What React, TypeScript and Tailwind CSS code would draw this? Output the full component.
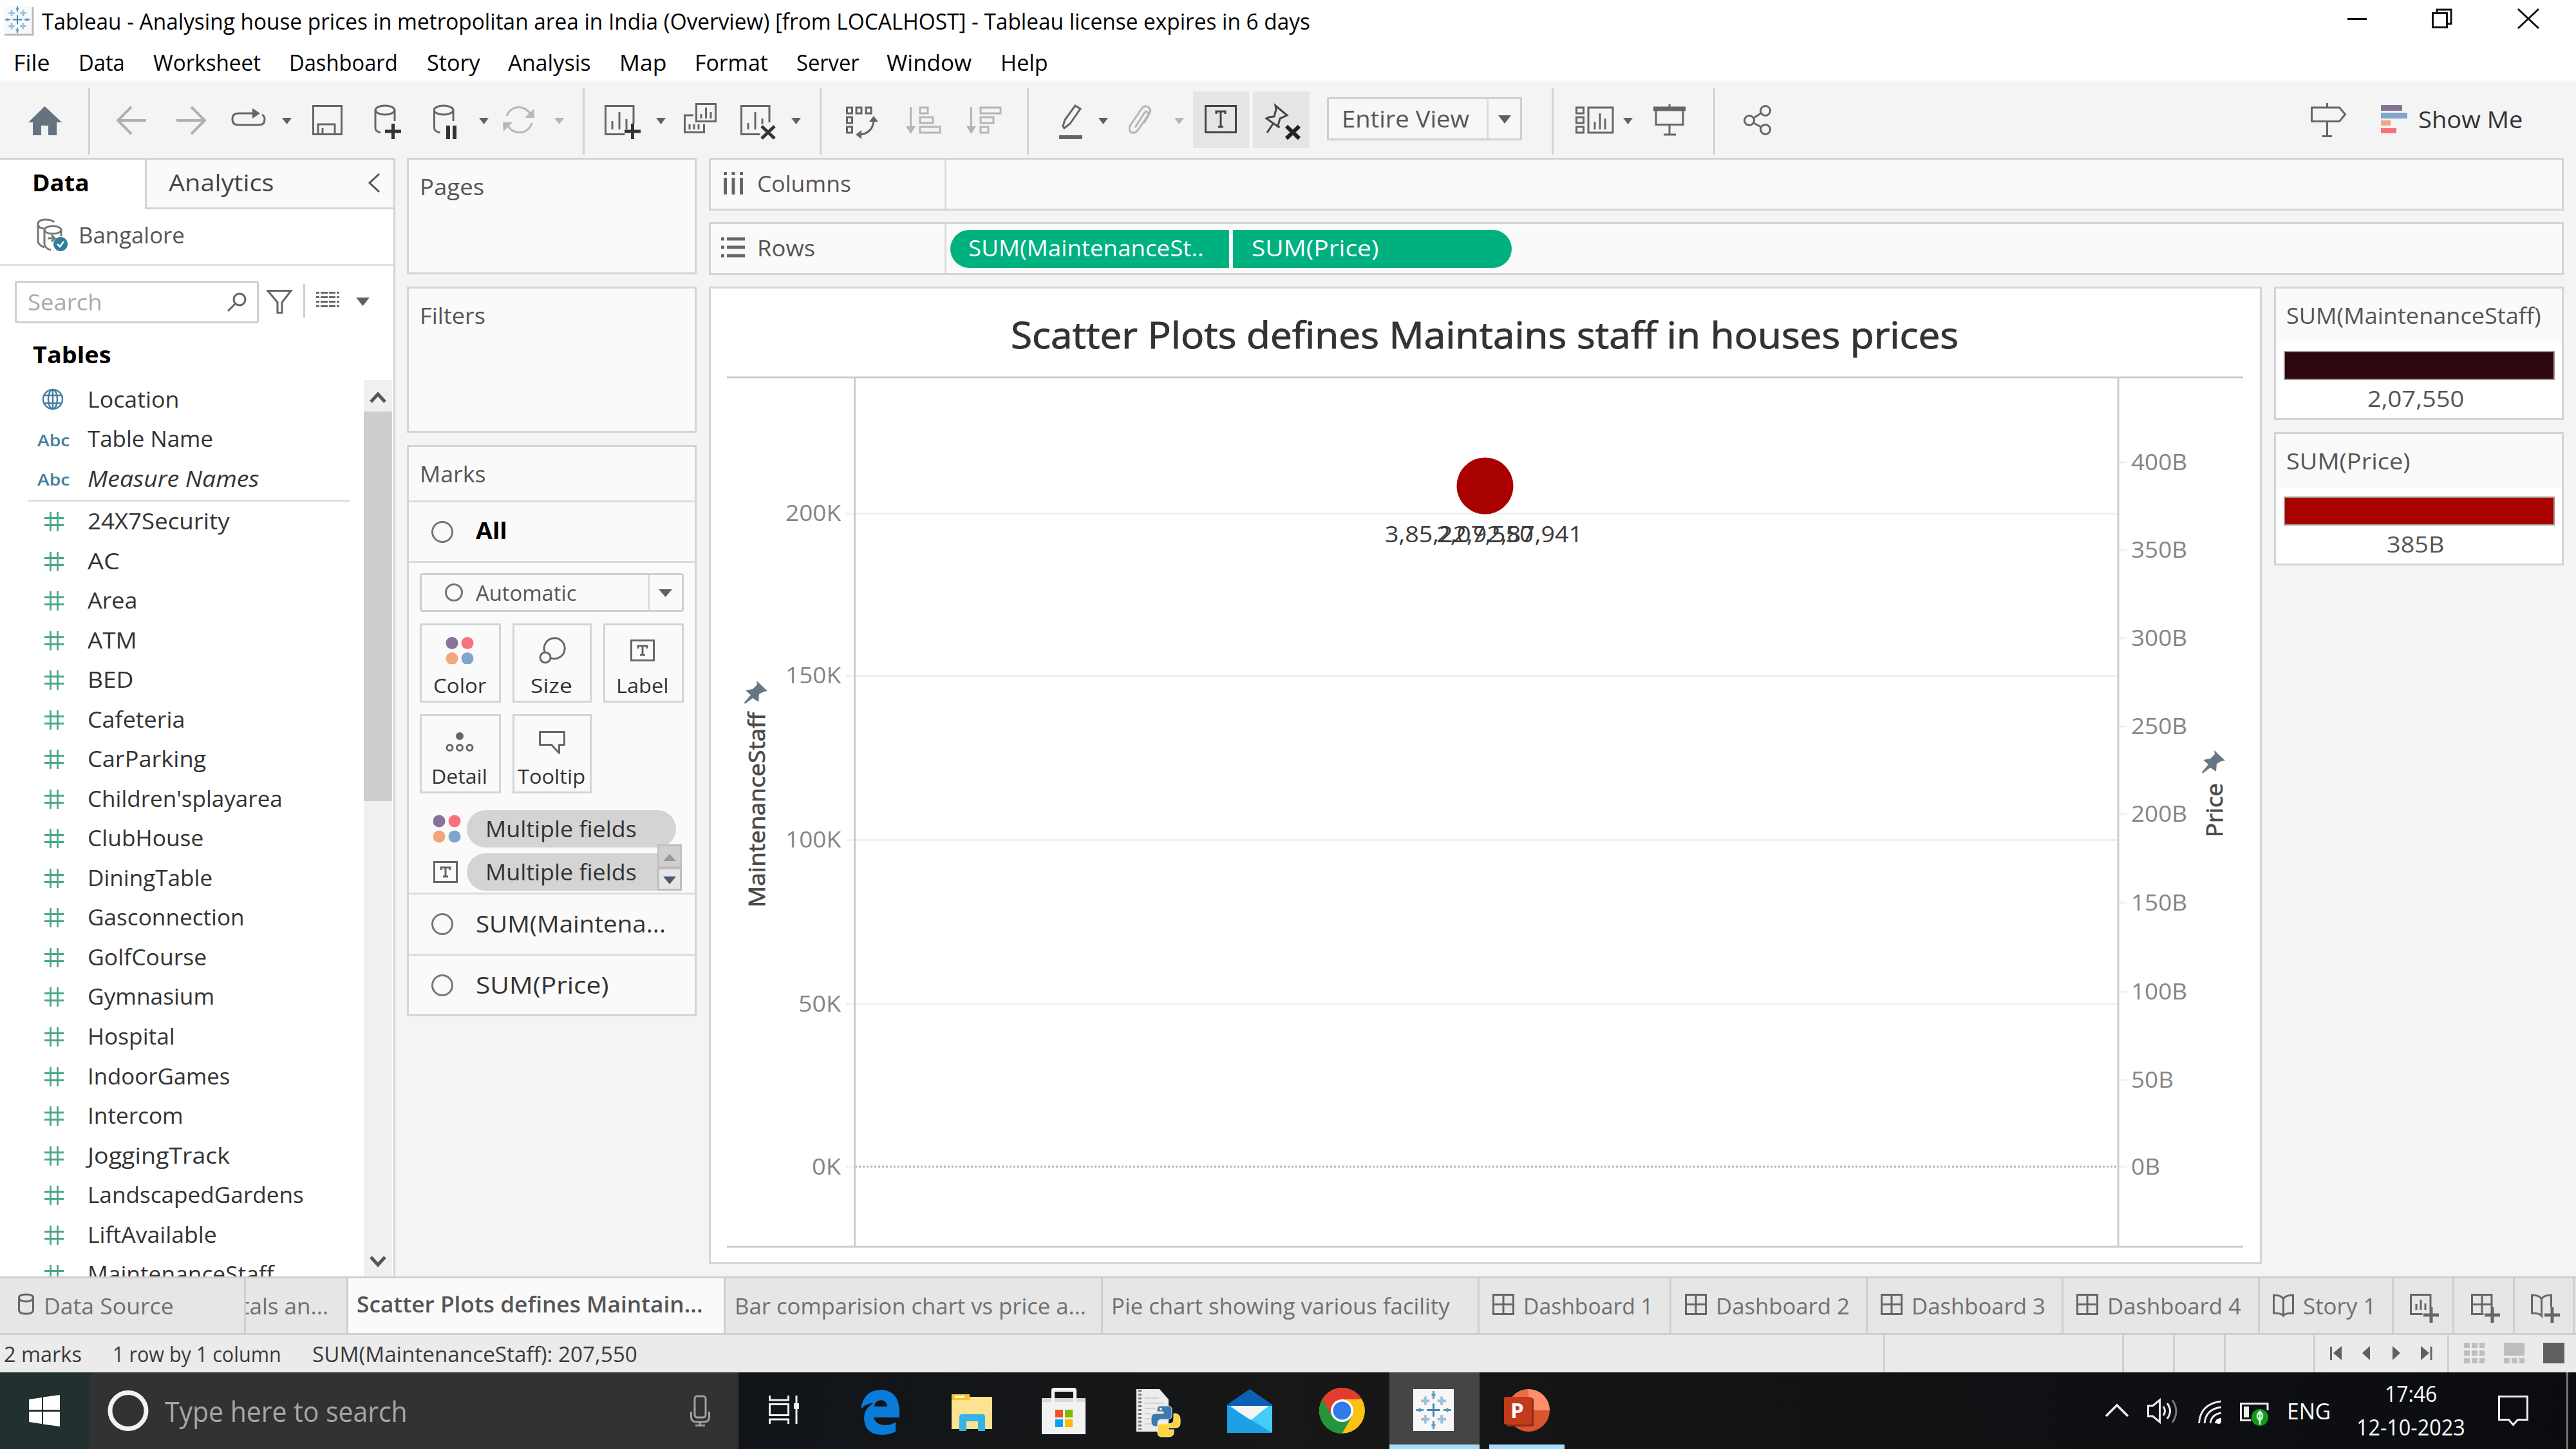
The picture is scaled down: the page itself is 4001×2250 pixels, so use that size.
import React, { useLayoutEffect, useRef } from "react";

type TextProps = { w: number; className?: string; children: string };

/** A single line of text, stretched horizontally so that it spans `w` pixels. */
function T({ w, className = "", children }: TextProps) {
  const ref = useRef<HTMLSpanElement>(null);
  useLayoutEffect(() => {
    const el = ref.current;
    if (!el || !el.parentElement) return;
    el.parentElement.style.width = `${w}px`;
    el.style.transform = `scaleX(${(w + 3) / el.offsetWidth})`;
  }, [w, children]);
  return (
    <span className={`flex shrink-0 justify-start whitespace-pre leading-none ${className}`}>
      <span ref={ref} className="-ml-[2px] block shrink-0 origin-left">
        {children}
      </span>
    </span>
  );
}

type IcoProps = { box: [number, number, number, number]; c?: string; sw?: number; className?: string; children: React.ReactNode };

function Ico({ box, c = "#666", sw = 3, className = "", children }: IcoProps) {
  return (
    <svg
      width={box[2]}
      height={box[3]}
      viewBox={box.join(" ")}
      fill="none"
      stroke={c}
      strokeWidth={sw}
      className={`block shrink-0 ${className}`}
    >
      {children}
    </svg>
  );
}

/* ---------- shared drawings ---------- */

function Plus({ x, y, r, v = r, c, s = 3 }: { x: number; y: number; r: number; v?: number; c: string; s?: number }) {
  return <path d={`M${x - r} ${y}h${2 * r}M${x} ${y - v}v${2 * v}`} stroke={c} strokeWidth={s} />;
}

function TableauMark({ x, y, k }: { x: number; y: number; k: number }) {
  return (
    <g>
      <Plus x={x} y={y} r={10 * k} c="#3f83ae" s={2.8 * k} />
      <Plus x={x} y={y - 23 * k} r={3 * k} v={6 * k} c="#5b97bd" s={3 * k} />
      <Plus x={x} y={y + 23 * k} r={3 * k} v={6 * k} c="#5b97bd" s={3 * k} />
      <Plus x={x - 21 * k} y={y} r={6 * k} v={3 * k} c="#5b97bd" s={3 * k} />
      <Plus x={x + 21 * k} y={y} r={6 * k} v={3 * k} c="#5b97bd" s={3 * k} />
      <Plus x={x - 12.5 * k} y={y - 14 * k} r={6.5 * k} c="#9cc1d8" s={4 * k} />
      <Plus x={x + 12.5 * k} y={y - 14 * k} r={6.5 * k} c="#9cc1d8" s={4 * k} />
      <Plus x={x - 12.5 * k} y={y + 14 * k} r={6.5 * k} c="#9cc1d8" s={4 * k} />
      <Plus x={x + 12.5 * k} y={y + 14 * k} r={6.5 * k} c="#9cc1d8" s={4 * k} />
    </g>
  );
}

function Dots({ x, y }: { x: number; y: number }) {
  return (
    <g stroke="none">
      <circle cx={x} cy={y} r="9.5" fill="#86739a" />
      <circle cx={x + 24} cy={y} r="9.5" fill="#f8717f" />
      <circle cx={x} cy={y + 24} r="9.5" fill="#f2a679" />
      <circle cx={x + 24} cy={y + 24} r="9.5" fill="#7fa5cc" />
    </g>
  );
}

function TBox({ x, y, w = 38, h = 34 }: { x: number; y: number; w?: number; h?: number }) {
  const m = x + w / 2;
  return (
    <g>
      <rect x={x + 1.5} y={y + 1.5} width={w - 3} height={h - 3} />
      <path d={`M${m - 7} ${y + 14}v-4h14v4M${m} ${y + 10}v${h - 20}M${m - 4} ${y + h - 10}h8`} />
    </g>
  );
}

/* ---------- title bar and menu ---------- */

function TitleBar() {
  return (
    <div className="flex h-[66px] items-start bg-white">
      <Ico box={[0, 0, 67, 66]}>
        <rect x="7" y="10" width="44" height="44" fill="#f6f8fa" stroke="none" />
        <path d="M7 54h44V11" stroke="#b9b9b9" strokeWidth="3" />
        <TableauMark x={27} y={30.5} k={0.72} />
      </Ico>
      <div className="flex h-[64px] items-center">
        <T w={1967} className="text-[35px] text-black">
          Tableau - Analysing house prices in metropolitan area in India (Overview) [from LOCALHOST] - Tableau license expires in 6 days
        </T>
      </div>
      <Ico box={[3640, 0, 361, 66]} c="#111" className="ml-auto">
        <path d="M3646 29.5h30" />
        <path d="M3778.500 20.500h22v22h-22zM3785 19v-4h22v22h-5" />
        <path d="M3911 14l32 30M3943 14l-32 30" />
      </Ico>
    </div>
  );
}

function MenuBar() {
  return (
    <div className="grid h-[59px] grid-cols-[101px_116px_211px_214px_126px_173px_117px_158px_140px_177px_100px] items-center justify-items-start bg-white pl-[23px] pt-[2px] text-[35px] text-black">
      <T w={53}>File</T>
      <T w={69}>Data</T>
      <T w={164}>Worksheet</T>
      <T w={166}>Dashboard</T>
      <T w={80}>Story</T>
      <T w={126}>Analysis</T>
      <T w={70}>Map</T>
      <T w={111}>Format</T>
      <T w={95}>Server</T>
      <T w={129}>Window</T>
      <T w={71}>Help</T>
    </div>
  );
}

/* ---------- toolbar ---------- */

function Tool({ x, w, c, children }: { x: number; w: number; c?: string; children: React.ReactNode }) {
  return (
    <Ico box={[x, 142, w, 88]} c={c}>
      {children}
    </Ico>
  );
}

function Caret({ light = false }: { light?: boolean }) {
  return (
    <Ico box={[0, 142, 16, 88]}>
      <path d="M0 183h15l-7.500 10z" stroke="none" fill={light ? "#b5b5b5" : "#606060"} />
    </Ico>
  );
}

function Sep() {
  return <div className="-mt-[5px] h-[103px] w-[3px] bg-[#d2d2d2]" />;
}

function Toolbar() {
  return (
    <div className="grid h-[120px] grid-cols-[94px_44px_92px_86px_79px_47px_96px_92px_71px_37px_80px_44px_34px_80px_43px_88px_79px_44px_41px_93px_94px_94px_49px_62px_47px_71px_29px_93px_115px_349px_37px_74px_47px_93px_47px_881px_109px_303px] items-start bg-[#f4f4f4] pl-[43px] pt-[17px]">
      <Tool x={43} w={56}>
        <path d="M69.500 165L44 190h7v20h13v-15h11v15h13v-20h8z" fill="#66727f" stroke="none" />
      </Tool>
      <Sep />
      <Tool x={181} w={50} c="#b0b0b0">
        <path d="M227 187h-43M204 166l-21 21 21 21" strokeWidth="4" />
      </Tool>
      <Tool x={273} w={50} c="#b0b0b0">
        <path d="M274 187h43M297 166l21 21-21 21" strokeWidth="4" />
      </Tool>
      <Tool x={359} w={58}>
        <path d="M396 176h-26q-9 0-9 9t9 9h32q9 0 9-9 0-5-4-7" />
        <path d="M392 168l12 8-12 8z" fill="#666" stroke="none" />
      </Tool>
      <Caret />
      <Tool x={485} w={50}>
        <path d="M486.500 164.500h44v44h-44z M494 208v-15h26v15M501 208v-9" />
      </Tool>
      <Tool x={581} w={46}>
        <ellipse cx="598" cy="171" rx="15" ry="7" />
        <path d="M583 171v28q0 5 8 7M613 171v17" />
        <path d="M598 204h25M610.500 192v24" stroke="#333" strokeWidth="5" />
      </Tool>
      <Tool x={673} w={46}>
        <ellipse cx="689" cy="171" rx="15" ry="7" />
        <path d="M674.500 171v28q0 5 9 7M704 171v17" />
        <path d="M696 195v21M706 195v21" stroke="#333" strokeWidth="6" />
      </Tool>
      <Caret />
      <Tool x={781} w={54} c="#b8b8b8">
        <path d="M787 180a20 20 0 0 1 37-2M826 191a20 20 0 0 1-38 2" />
        <path d="M815 183h15l-1-14zM796 190h-15l1 14z" fill="#b8b8b8" stroke="none" />
      </Tool>
      <Caret light />
      <Sep />
      <Tool x={939} w={58}>
        <path d="M984 192v-27.500h-43.500v44h30M951 201v-13M962 201v-27M973 201v-16" />
        <path d="M970 204h25M982.500 192v24" stroke="#333" strokeWidth="5" />
      </Tool>
      <Caret />
      <Tool x={1062} w={54}>
        <path d="M1081.500 161.500h30v27h-30zM1077 179h-13.500v26.500h30V193M1089 184v-7M1096.500 184v-17M1104 184v-10M1071 201v-8M1078 201v-8M1085 201v-8" />
      </Tool>
      <Tool x={1150} w={60}>
        <path d="M1195 190v-25.500h-43.500v44h29M1162 201v-10M1173 201v-27M1184 193v-9" />
        <path d="M1183 196l20 19M1203 196l-20 19" stroke="#333" strokeWidth="5" />
      </Tool>
      <Caret />
      <Sep />
      <Tool x={1314} w={54}>
        <path d="M1315.500 167h8v9h-8zM1330 167h8v9h-8zM1345 167h8v9h-8zM1315.500 182h8v9h-8zM1315.500 197h8v9h-8z" />
        <path d="M1337 209q18-3 20-21" />
        <path d="M1350 189h14l-7-9zM1338 202v14l-9-7z" fill="#666" stroke="none" />
      </Tool>
      <Tool x={1407} w={58} c="#b5b5b5">
        <path d="M1414.500 166v38M1429 167h12v9h-12zM1429 182h20v9h-20zM1429 197h31v9h-31z" />
        <path d="M1407 196h15l-7.500 12z" fill="#b5b5b5" stroke="none" />
      </Tool>
      <Tool x={1501} w={58} c="#b5b5b5">
        <path d="M1508.500 166v38M1523 167h31v9h-31zM1523 182h20v9h-20zM1523 197h12v9h-12z" />
        <path d="M1501 196h15l-7.500 12z" fill="#b5b5b5" stroke="none" />
      </Tool>
      <Sep />
      <Tool x={1644} w={40}>
        <path d="M1651 196l3-10 16-22 8 5-16 23-9 7z" />
        <path d="M1645 213h36" strokeWidth="6" />
      </Tool>
      <Caret />
      <Tool x={1753} w={40} c="#b5b5b5">
        <path d="M1763 198l14-22q3-5 6-1 1 3-1 6l-14 20q-6 8-12 4-4-4 0-11l17-25q4-6 10-3 6 4 2 11l-8 14" />
      </Tool>
      <Caret light />
      <Tool x={1853} w={88} c="#444">
        <rect x="1853" y="142" width="87" height="88" fill="#e5e5e5" stroke="none" />
        <TBox x={1871} y={163} w={50} h={44} />
      </Tool>
      <Tool x={1946} w={88} c="#444">
        <rect x="1946" y="142" width="88" height="88" fill="#e5e5e5" stroke="none" />
        <path d="M1981 164l18 15-4 2-7 3-3 11 2 3-20-14 4-2 8-1 3-11zM1978 191l-10 15" />
        <path d="M1998 196l20 19M2018 196l-20 19" stroke="#222" strokeWidth="6" />
      </Tool>
      <div className="mt-[9px] flex h-[67px] w-[303px] items-center border-[3px] border-[#cfcfcf] bg-[#f7f7f7] text-[36px] text-[#555]">
        <div className="flex h-full w-[248px] items-center border-r-[3px] border-[#dcdcdc] pl-[22px]">
          <T w={195}>Entire View</T>
        </div>
        <Ico box={[0, 0, 48, 60]}>
          <path d="M15 24h20l-10 13z" fill="#606060" stroke="none" />
        </Ico>
      </div>
      <Sep />
      <Tool x={2447} w={62}>
        <path d="M2448.500 167h11v9h-11zM2448.500 182h11v9h-11zM2448.500 197h11v9h-11zM2467 167h38v39h-38zM2477 201v-12M2485 201v-25M2493 201v-17" />
      </Tool>
      <Caret />
      <Tool x={2568} w={52}>
        <path d="M2593 162v4M2572 172v21.500h42V172M2593 194v15M2584 209h19" />
        <path d="M2568 169h50" strokeWidth="7" />
      </Tool>
      <Sep />
      <Tool x={2708} w={46}>
        <circle cx="2717" cy="187" r="7.500" />
        <circle cx="2742" cy="172" r="7.500" />
        <circle cx="2742" cy="201" r="7.500" />
        <path d="M2724 183l11-7M2724 191l11 6" />
      </Tool>
      <Tool x={3589} w={58}>
        <path d="M3614.500 160v6M3614.500 190v22M3607 211.500h15M3590.500 167h43l9 10.500-9 11h-43z" />
      </Tool>
      <div className="flex items-center text-[36px] text-[#333]">
        <Tool x={3698} w={60}>
          <g stroke="none">
            <path d="M3698 163h33v9h-33z" fill="#86739a" />
            <path d="M3698 175h41v9h-41z" fill="#7fa5cc" />
            <path d="M3698 187h15v8h-15z" fill="#f2a679" />
            <path d="M3698 199h24v8h-24z" fill="#f8717f" />
          </g>
        </Tool>
        <T w={159}>Show Me</T>
      </div>
    </div>
  );
}

/* ---------- data pane ---------- */

const MEASURES: [string, number][] = [
  ["24X7Security", 217],
  ["AC", 47],
  ["Area", 74],
  ["ATM", 74],
  ["BED", 69],
  ["Cafeteria", 148],
  ["CarParking", 181],
  ["Children'splayarea", 300],
  ["ClubHouse", 177],
  ["DiningTable", 191],
  ["Gasconnection", 241],
  ["GolfCourse", 182],
  ["Gymnasium", 194],
  ["Hospital", 133],
  ["IndoorGames", 218],
  ["Intercom", 146],
  ["JoggingTrack", 218],
  ["LandscapedGardens", 333],
  ["LiftAvailable", 198],
  ["MaintenanceStaff", 287],
];

function Field({ icon, w, name, className = "" }: { icon: React.ReactNode; w: number; name: string; className?: string }) {
  return (
    <div className="flex h-[61.530px] shrink-0 items-center pl-[60px]">
      <div className="flex w-[78px] items-center">{icon}</div>
      <T w={w} className={className}>
        {name}
      </T>
    </div>
  );
}

function DataPane() {
  const abc = (
    <T w={48} className="mt-[4px] text-[25px] font-semibold text-[#43809f]">
      Abc
    </T>
  );
  return (
    <div className="flex w-[614px] shrink-0 flex-col overflow-hidden border-r-[3px] border-t-[3px] border-[#d4d4d4] bg-white text-[34px] text-[#333]">
      <div className="flex h-[77px] shrink-0">
        <div className="flex w-[225px] items-center pb-[5px] pl-[52px]">
          <T w={86} className="text-[36px] font-bold text-black">
            Data
          </T>
        </div>
        <div className="flex flex-1 items-center border-b-[3px] border-l-[3px] border-[#d4d4d4] bg-[#fafafa] pl-[36px]">
          <T w={160} className="mb-[2px] text-[36px] text-[#444]">
            Analytics
          </T>
          <Ico box={[560, 260, 40, 44]} c="#555" className="mb-[2px] ml-auto mr-[10px]">
            <path d="M588 268l-15 14 15 14" />
          </Ico>
        </div>
      </div>
      <div className="flex h-[88px] shrink-0 items-center border-b-[3px] border-[#e2e2e2] pb-[6px] pl-[57px] text-[35px] text-[#555]">
        <Ico box={[57, 338, 67, 54]} c="#777">
          <path d="M59 347v28q1 6 10 9M84 345q-3-4-13-4-12 0-12 7 0 6 9 7" />
          <ellipse cx="82" cy="357" rx="13" ry="6" />
          <path d="M69 357v22q2 8 10 9M95 357v10M74 370h10M80 365l5 5-5 5" />
          <circle cx="94" cy="379" r="11" fill="#2f7f9c" stroke="none" />
          <path d="M89 379l4 4 6-8" stroke="#fff" strokeWidth="2.500" />
        </Ico>
        <T w={162}>Bangalore</T>
      </div>
      <div className="flex h-[111px] shrink-0 items-center pl-[23px]">
        <div className="flex h-[66px] w-[379px] items-center justify-between rounded-[4px] border-[3px] border-[#cfcfcf] pl-[19px] pr-[12px]">
          <T w={113} className="text-[#aaa]">
            Search
          </T>
          <Ico box={[350, 452, 36, 34]}>
            <circle cx="371" cy="465" r="9" />
            <path d="M364 472l-11 11" />
          </Ico>
        </div>
        <Ico box={[402, 436, 200, 66]}>
          <path d="M416 451.500h36l-14 18v16h-7v-16z" />
          <path d="M472.500 441v53" stroke="#cfcfcf" />
          <path d="M491 454.500h36M491 461.500h36M491 468.500h36M491 475.500h36" strokeDasharray="5 2 11 2 10 2 10" />
          <path d="M553 462h21l-10.500 13z" fill="#606060" stroke="none" />
        </Ico>
      </div>
      <div className="flex h-[61px] shrink-0 items-center pb-[8px] pl-[53px]">
        <T w={119} className="text-[36px] font-bold text-black">
          Tables
        </T>
      </div>
      <div className="flex min-h-0 flex-1">
        <div className="flex w-[565px] shrink-0 flex-col overflow-hidden pt-[4px]">
          <Field
            name="Location"
            w={139}
            icon={
              <Ico box={[60, 602, 44, 40]} c="#43809f" sw={2.500}>
                <circle cx="82" cy="622" r="15" />
                <ellipse cx="82" cy="622" rx="7" ry="15" />
                <path d="M68 616h28M68 628h28M82 607v30" />
              </Ico>
            }
          />
          <Field name="Table Name" w={192} icon={abc} />
          <Field name="Measure Names" w={263} icon={abc} className="italic" />
          <div className="ml-[43px] mt-[2px] h-[3px] w-[501px] shrink-0 bg-[#e0e0e0]" />
          {MEASURES.map(([name, w]) => (
            <Field
              key={name}
              name={name}
              w={w}
              icon={
                <Ico box={[60, 0, 44, 40]} c="#48a886" sw={2.800}>
                  <path d="M69 15.500h30M69 26.500h30M78.500 6v30M89.500 6v30" />
                </Ico>
              }
            />
          ))}
        </div>
        <div className="mt-[5px] flex w-[44px] flex-col bg-[#f0f0f0]">
          <Ico box={[565, 591, 44, 49]} c="#555" sw={5}>
            <path d="M576 625l11-12 11 12" />
          </Ico>
          <div className="h-[605px] w-full bg-[#cdcdcd]" />
          <Ico box={[565, 1935, 44, 49]} c="#555" sw={5} className="mt-auto">
            <path d="M576 1954l11 12 11-12" />
          </Ico>
        </div>
      </div>
    </div>
  );
}

/* ---------- cards column ---------- */

function MarkButton({ w, label, x, y, children }: { w: number; label: string; x: number; y: number; children: React.ReactNode }) {
  return (
    <div className="flex h-[123px] flex-col items-center border-[3px] border-[#d4d4d4] pt-[18px] text-[31px] text-[#333]">
      <Ico box={[x, y, 60, 42]}>{children}</Ico>
      <T w={w} className="mr-[2px] mt-[18px]">
        {label}
      </T>
    </div>
  );
}

function Ring({ r = 17 }: { r?: number }) {
  return (
    <Ico box={[-18, -18, 36, 36]} c="#777">
      <circle cx="0" cy="0" r={r - 1.5} />
    </Ico>
  );
}

function CardsColumn() {
  return (
    <div className="ml-[18px] flex w-[450px] shrink-0 flex-col text-[34px] text-[#555]">
      <div className="h-[181px] border-[3px] border-[#d4d4d4] bg-[#fafafa] pl-[19px] pt-[25px]">
        <T w={97}>Pages</T>
      </div>
      <div className="mt-[19px] h-[227px] border-[3px] border-[#d4d4d4] bg-[#fafafa] pl-[19px] pt-[25px]">
        <T w={99}>Filters</T>
      </div>
      <div className="mt-[19px] flex h-[887px] flex-col border-[3px] border-[#d4d4d4] bg-[#fafafa]">
        <div className="flex h-[86px] items-center border-b-[3px] border-[#dcdcdc] pl-[19px]">
          <T w={99}>Marks</T>
        </div>
        <div className="flex h-[94px] items-center gap-[36px] border-b-[3px] border-[#dcdcdc] pl-[34px] text-[36px]">
          <Ring />
          <T w={46} className="mb-[4px] font-bold text-black">
            All
          </T>
        </div>
        <div className="relative h-[515px] border-b-[3px] border-[#dcdcdc] pl-[17px] pt-[16px]">
          <div className="flex h-[60px] w-[410px] items-center rounded-[4px] border-[3px] border-[#cfcfcf]">
            <div className="flex h-full w-[354px] items-center gap-[18px] border-r-[3px] border-[#dcdcdc] pl-[32px]">
              <Ring r={14} />
              <T w={154} className="text-[33px]">
                Automatic
              </T>
            </div>
            <Ico box={[0, 0, 50, 54]}>
              <path d="M14 22h21l-10.500 12z" fill="#606060" stroke="none" />
            </Ico>
          </div>
          <div className="mt-[18px] grid grid-cols-[126px_123px_125px] gap-[18px]">
            <MarkButton w={79} label="Color" x={685} y={988}>
              <Dots x={702} y={997.5} />
            </MarkButton>
            <MarkButton w={62} label="Size" x={828} y={988}>
              <path d="M846 1011a16 16 0 1 1 10 10" />
              <circle cx="847" cy="1020" r="8" />
            </MarkButton>
            <MarkButton w={79} label="Label" x={969} y={988}>
              <TBox x={978} y={992} />
            </MarkButton>
            <MarkButton w={84} label="Detail" x={685} y={1128}>
              <circle cx="714" cy="1141" r="6" fill="#666" stroke="none" />
              <circle cx="698.500" cy="1159" r="4.500" />
              <circle cx="714" cy="1159" r="4.500" />
              <circle cx="729.500" cy="1159" r="4.500" />
            </MarkButton>
            <MarkButton w={102} label="Tooltip" x={828} y={1128}>
              <path d="M838.500 1134.500h38v20h-8v13l-12-13h-18z" strokeLinejoin="round" />
            </MarkButton>
          </div>
          <div className="mt-[26px] flex items-center pl-[21px] text-[34px] text-[#333]">
            <Ico box={[673, 1259, 52, 58]}>
              <Dots x={682} y={1276} />
            </Ico>
            <div className="flex h-[58px] w-[325px] items-center rounded-full bg-[#d4d4d4] pl-[31px]">
              <T w={232} className="font-medium">
                Multiple fields
              </T>
            </div>
          </div>
          <div className="mt-[9px] flex items-center pl-[21px] text-[34px] text-[#333]">
            <Ico box={[673, 1326, 52, 58]}>
              <TBox x={673} y={1338} />
            </Ico>
            <div className="flex h-[58px] w-[310px] items-center rounded-l-full bg-[#d4d4d4] pl-[31px]">
              <T w={232} className="font-medium">
                Multiple fields
              </T>
            </div>
          </div>
          <div className="absolute bottom-[3px] left-[386px] flex w-[38px] flex-col">
            <Ico box={[0, 0, 38, 36]} c="#c0c0c0">
              <rect x="1.500" y="1.500" width="35" height="34" fill="#cfcfcf" />
              <path d="M9 26h20l-10-11z" fill="#999" stroke="none" />
            </Ico>
            <Ico box={[0, 0, 38, 36]} c="#bdbdbd">
              <rect x="1.500" y="1.500" width="35" height="33" fill="#e6e6e6" />
              <path d="M9 14h20l-10 12z" fill="#4a5a6e" stroke="none" />
            </Ico>
          </div>
        </div>
        <div className="flex h-[95px] items-center gap-[36px] border-b-[3px] border-[#dcdcdc] pl-[34px] text-[36px] text-[#333]">
          <Ring />
          <T w={292}>SUM(Maintena...</T>
        </div>
        <div className="flex h-[91px] items-center gap-[36px] pl-[34px] text-[36px] text-[#333]">
          <Ring />
          <T w={204}>SUM(Price)</T>
        </div>
      </div>
    </div>
  );
}

/* ---------- chart ---------- */

const LEFT_TICKS: [string, number, number][] = [
  ["200K", 797, 84],
  ["150K", 1049, 84],
  ["100K", 1304, 84],
  ["50K", 1559, 64],
  ["0K", 1812, 43],
];
const RIGHT_TICKS: [string, number, number][] = [
  ["400B", 718, 85],
  ["350B", 854, 85],
  ["300B", 991, 85],
  ["250B", 1128, 85],
  ["200B", 1264, 85],
  ["150B", 1402, 85],
  ["100B", 1540, 85],
  ["50B", 1677, 64],
  ["0B", 1812, 43],
];

function Pin({ x, y }: { x: number; y: number }) {
  return (
    <path
      transform={`translate(${x} ${y})`}
      d="M20 0l17 16-6 1-7 4-1 12-9-6-12 9-1-2 10-12-8-7 11-2 7-7z"
      fill="#687683"
    />
  );
}

function Chart() {
  return (
    <svg width="2406" height="1512" viewBox="1104 448 2406 1512" className="block font-['Open_Sans',sans-serif]">
      <text x="1570" y="541" textLength="1472" lengthAdjust="spacingAndGlyphs" fontSize="56" fill="#333" stroke="#333" strokeWidth="1">
        Scatter Plots defines Maintains staff in houses prices
      </text>
      <g stroke="#f0f0f0" strokeWidth="3">
        {LEFT_TICKS.slice(0, 4).map(([t, y]) => (
          <path key={t} d={`M1314 ${y}.500H3290`} />
        ))}
        <path d="M1314 1812H1327" />
        {RIGHT_TICKS.map(([t, y]) => (
          <path key={t} d={`M3291 ${y}H3303`} />
        ))}
      </g>
      <path d="M1328 1811.500H3290" stroke="#b3b3b3" strokeWidth="3" strokeDasharray="3 3" />
      <path d="M1129 586H3484M1129 1936H3484M1327.500 586V1936M3290 586V1936" stroke="#cccccc" strokeWidth="3" />
      <g fontSize="34" fill="#858585">
        {LEFT_TICKS.map(([t, y, w]) => (
          <text key={t} x={1304 - w} y={y + 12} textLength={w + 2} lengthAdjust="spacingAndGlyphs">
            {t}
          </text>
        ))}
        {RIGHT_TICKS.map(([t, y, w]) => (
          <text key={t} x={3310} y={y + 12} textLength={w + 2} lengthAdjust="spacingAndGlyphs">
            {t}
          </text>
        ))}
      </g>
      <circle cx="2306.500" cy="754.500" r="44" fill="#a90000" />
      <g fontSize="35" fill="#3a3a3a">
        <text x="2151" y="842" textLength="307" lengthAdjust="spacingAndGlyphs">
          3,85,22,92,87,941
        </text>
        <text x="2231" y="842" textLength="151" lengthAdjust="spacingAndGlyphs">
          2,07,550
        </text>
      </g>
      <g fontSize="34" fill="#4a4a4a" stroke="#4a4a4a" strokeWidth="0.800">
        <text transform="translate(1188 1409) rotate(-90)" textLength="303" lengthAdjust="spacingAndGlyphs">
          MaintenanceStaff
        </text>
        <text transform="translate(3452 1300) rotate(-90)" textLength="84" lengthAdjust="spacingAndGlyphs">
          Price
        </text>
      </g>
      <Pin x={1155} y={1057} />
      <Pin x={3419} y={1165} />
    </svg>
  );
}

function Legend({ title, w, value, vw, bar }: { title: string; w: number; value: string; vw: number; bar: string }) {
  return (
    <div className="flex h-[207px] flex-col items-center border-[3px] border-[#d4d4d4] bg-white text-[34px] text-[#555]">
      <div className="flex h-[84px] w-full items-center bg-[#fafafa] pl-[18px]">
        <T w={w}>{title}</T>
      </div>
      <div className={`mt-[13px] h-[45px] w-[421px] border-[2px] border-[#a09a90] ${bar}`} />
      <T w={vw} className="mr-[10px] mt-[12px]">
        {value}
      </T>
    </div>
  );
}

function Shelf({ icon, label, w, className = "", children }: { icon: React.ReactNode; label: string; w: number; className?: string; children?: React.ReactNode }) {
  return (
    <div className={`flex h-[82px] w-[2881px] border-[3px] border-[#d4d4d4] bg-[#fafafa] ${className}`}>
      <div className="flex w-[366px] shrink-0 items-center border-r-[3px] border-[#dcdcdc] text-[34px] text-[#555]">
        <div className="w-[74px]">{icon}</div>
        <T w={w} className="mb-[3px]">
          {label}
        </T>
      </div>
      <div className="flex flex-1 items-center gap-[6px] pl-[6px] text-[34px] text-white">{children}</div>
    </div>
  );
}

function ViewArea() {
  return (
    <div className="ml-[19px] flex flex-col">
      <Shelf
        label="Columns"
        w={143}
        icon={
          <Ico box={[1104, 264, 60, 42]} sw={5}>
            <path d="M1126.500 266v5M1139 266v5M1151.500 266v5M1126.500 275v26M1139 275v26M1151.500 275v26" />
          </Ico>
        }
      />
      <Shelf
        className="mt-[18px]"
        label="Rows"
        w={87}
        icon={
          <Ico box={[1104, 365, 60, 42]} sw={5}>
            <path d="M1120 371h5M1120 384h5M1120 397h5M1129 371h28M1129 384h28M1129 397h28" />
          </Ico>
        }
      >
        <div className="flex h-[59px] w-[433px] items-center rounded-l-full bg-[#00b180] pb-[2px] pl-[30px]">
          <T w={363}>SUM(MaintenanceSt..</T>
        </div>
        <div className="flex h-[59px] w-[433px] items-center rounded-r-full bg-[#00b180] pb-[2px] pl-[31px]">
          <T w={194}>SUM(Price)</T>
        </div>
      </Shelf>
      <div className="mt-[18px] flex items-start gap-[19px]">
        <div className="h-[1518px] w-[2412px] border-[3px] border-[#d4d4d4] bg-white">
          <Chart />
        </div>
        <div className="flex w-[450px] flex-col gap-[19px]">
          <Legend title="SUM(MaintenanceStaff)" w={393} value="2,07,550" vw={147} bar="bg-[#2e060e]" />
          <Legend title="SUM(Price)" w={189} value="385B" vw={86} bar="bg-[#a90000]" />
        </div>
      </div>
    </div>
  );
}

/* ---------- sheet tabs and status ---------- */

const GridIcon = (
  <Ico box={[0, 0, 50, 88]}>
    <path d="M1.500 26.500h31v30h-31zM17 26v31M1 41.500h32" />
  </Ico>
);
const BookPath = "M1.500 27v28q12 0 15 4 3-4 15-4v-28q-12 0-15 6-3-6-15-6zM16.500 33v26";

function Tab({ className, children }: { className: string; children: React.ReactNode }) {
  return <div className={`flex h-full shrink-0 items-center overflow-hidden border-r-[3px] border-[#cfcfcf] ${className}`}>{children}</div>;
}

function SheetTabs() {
  return (
    <div className="flex h-[91px] border-b-[3px] border-t-[3px] border-[#cfcfcf] bg-[#e6e6e6] text-[34px] text-[#707070]">
      <Tab className="w-[382px] pl-[28px]">
        <Ico box={[0, 0, 42, 88]}>
          <path d="M1.500 31q0-5 11-5t11 5v19q0 6-11 6t-11-6zM1.500 32q2 5 11 5t11-5" />
        </Ico>
        <T w={199}>Data Source</T>
      </Tab>
      <Tab className="w-[159px] justify-end pr-[29px]">
        <T w={132}>tals an...</T>
      </Tab>
      <Tab className="w-[586px] bg-[#fafafa] pb-[5px] pl-[15px]">
        <T w={535} className="font-semibold text-[#555]">
          Scatter Plots defines Maintain...
        </T>
      </Tab>
      <Tab className="w-[586px] pl-[16px]">
        <T w={543}>Bar comparision chart vs price a...</T>
      </Tab>
      <Tab className="w-[585px] pl-[15px]">
        <T w={523}>Pie chart showing various facility</T>
      </Tab>
      <Tab className="w-[298px] pl-[20px]">
        {GridIcon}
        <T w={199}>Dashboard 1</T>
      </Tab>
      <Tab className="w-[305px] pl-[21px]">
        {GridIcon}
        <T w={205}>Dashboard 2</T>
      </Tab>
      <Tab className="w-[304px] pl-[20px]">
        {GridIcon}
        <T w={205}>Dashboard 3</T>
      </Tab>
      <Tab className="w-[305px] pl-[20px]">
        {GridIcon}
        <T w={205}>Dashboard 4</T>
      </Tab>
      <Tab className="w-[208px] pl-[20px]">
        <Ico box={[0, 0, 49, 88]}>
          <path d={BookPath} />
        </Ico>
        <T w={110}>Story 1</T>
      </Tab>
      <Tab className="w-[94px] pl-[25px]">
        <Ico box={[0, 0, 50, 88]}>
          <path d="M32 46v-19.500h-30.500v30h18M10 50v-9M17 50v-16M24 50v-10" />
          <path d="M21 58h24M33 46v24" strokeWidth="5" />
        </Ico>
      </Tab>
      <Tab className="w-[94px] pl-[26px]">
        <Ico box={[0, 0, 50, 88]}>
          <path d="M32 46v-19.500h-30.500v30h18M17 26v31M1 41.500h31" />
          <path d="M21 58h24M33 46v24" strokeWidth="5" />
        </Ico>
      </Tab>
      <Tab className="w-[93px] pl-[25px]">
        <Ico box={[0, 0, 50, 88]}>
          <path d="M31.500 46v-19q-12 0-15 6-3-6-15-6v28q12 0 15 4v-26" />
          <path d="M21 58h24M33 46v24" strokeWidth="5" />
        </Ico>
      </Tab>
    </div>
  );
}

function StatusBar() {
  return (
    <div className="flex h-[58px] items-center bg-[#ebebeb] text-[33px] text-[#3a3a3a]">
      <div className="flex h-full w-[2928px] items-center border-r-[3px] border-[#d0d0d0] pl-[8px]">
        <T w={118}>2 marks</T>
        <T w={259} className="ml-[51px]">
          1 row by 1 column
        </T>
        <T w={502} className="ml-[51px]">
          SUM(MaintenanceStaff): 207,550
        </T>
      </div>
      <div className="h-full w-[371px] border-r-[3px] border-[#d0d0d0]" />
      <div className="h-full w-[79px] border-r-[3px] border-[#d0d0d0]" />
      <div className="h-full w-[79px] border-r-[3px] border-[#d0d0d0]" />
      <div className="h-full w-[139px] border-r-[3px] border-[#d0d0d0]" />
      <div className="h-full w-[208px] border-r-[3px] border-[#d0d0d0]">
        <Ico box={[3596, 2073, 205, 58]}>
          <path d="M3620.500 2091v21M3776 2091v21" />
          <path
            d="M3637 2090v22l-13-11zM3681 2090v22l-12-11zM3716 2090v22l12-11zM3760 2090v22l13-11z"
            fill="#606060"
            stroke="none"
          />
        </Ico>
      </div>
      <Ico box={[3804, 2073, 197, 58]}>
        <g stroke="#bdbdbd" strokeWidth="8">
          <path d="M3827 2089h32M3827 2101h32M3827 2113h32M3889 2113h32" strokeDasharray="9 3" />
        </g>
        <path d="M3889 2085h32v20h-32z" fill="#bdbdbd" stroke="none" />
        <path d="M3950 2085h33v32h-33z" fill="#606060" stroke="none" />
      </Ico>
    </div>
  );
}

/* ---------- taskbar ---------- */

function TaskIcon({ x, w, children }: { x: number; w: number; children: React.ReactNode }) {
  return (
    <Ico box={[x, 2131, w, 119]} c="none">
      {children}
    </Ico>
  );
}

function Taskbar() {
  return (
    <div className="flex h-[119px] bg-linear-to-r from-[#08111c] via-[#171717] to-[#0a0c10] text-white">
      <div className="w-[140px] bg-[#22302f]">
        <TaskIcon x={0} w={140}>
          <path d="M45 2173l20-3v19H45zM67 2169.500l26-3.500v23H67zM45 2192h20v19l-20-3zM67 2192h26v23l-26-3.500z" fill="#fff" />
        </TaskIcon>
      </div>
      <div className="flex w-[1007px] items-center bg-[#323232]">
        <Ico box={[140, 2131, 118, 119]} c="#f2f2f2" sw={7}>
          <circle cx="199" cy="2190.500" r="28" />
        </Ico>
        <T w={374} className="mt-[2px] text-[43px] text-[#a6a6a6]">
          Type here to search
        </T>
        <Ico box={[1060, 2131, 60, 119]} c="#a0a0a0" className="ml-auto mr-[27px]">
          <rect x="1079" y="2168" width="17" height="33" rx="4" />
          <path d="M1073.500 2192v8q0 8 8 8h12q8 0 8-8v-8M1087.500 2208v6M1080 2213.500h15" />
        </Ico>
      </div>
      <div className="grid grid-cols-[143px_141px_140px_147px_141px_143px_109px_155px_140px] pl-[47px]">
        <Ico box={[1194, 2131, 52, 119]} c="#f0f0f0">
          <path d="M1195.500 2167v7h29v-7M1195.500 2211v-7h29v7M1195.500 2180.500h29v17h-29zM1237 2167v44" />
          <path d="M1237 2179v9" strokeWidth="8" />
        </Ico>
        <TaskIcon x={1337} w={64}>
          <path
            d="M1337 2188q4-29 31-30 28 1 29 33v10h-40q3 12 19 12 8 0 15-5v15q-9 5-22 5-27-1-27-27 1-12 9-18 3-3 6-5-13 2-20 10zM1358 2184h20q-1-10-10-10-9 1-10 10z"
            fill="#0a7bd8"
            fillRule="evenodd"
          />
        </TaskIcon>
        <TaskIcon x={1478} w={66}>
          <path d="M1478 2165h28v4h35v50h-63z" fill="#fde291" />
          <path d="M1478 2165h28v9h-28z" fill="#f2c530" />
          <path d="M1483 2167h15v4h-15z" fill="#fff3c4" />
          <path d="M1490 2222v-22q0-4 4-4h32q4 0 4 4v22h-11v-15h-18v15z" fill="#38b2e6" />
        </TaskIcon>
        <TaskIcon x={1618} w={70}>
          <path d="M1618 2175h68v56h-68z" fill="#f2f2f2" transform="translate(0 -4)" />
          <path d="M1618 2171h68v6h-68z" fill="#d9d9d9" />
          <path d="M1633 2182v-23q0-4 4-4h31q4 0 4 4v23h-5v-21h-29v21z" fill="#f4f4f4" />
          <path d="M1639 2189h12v12h-12z" fill="#f25022" />
          <path d="M1654 2189h12v12h-12z" fill="#7fba00" />
          <path d="M1639 2204h12v12h-12z" fill="#00a4ef" />
          <path d="M1654 2204h12v12h-12z" fill="#ffb900" />
        </TaskIcon>
        <TaskIcon x={1765} w={72}>
          <path d="M1765 2157h36l14 16v50h-50z" fill="#ececec" />
          <path d="M1770.500 2158v62" stroke="#777" strokeWidth="5" strokeDasharray="3 3" />
          <path d="M1778 2171h22M1778 2179h30M1778 2187h16M1778 2195h10M1778 2203h8M1778 2211h18" stroke="#d2d2d2" strokeWidth="2" />
          <path
            d="M1804 2183h10q6 0 6 6v9q0 6-6 6h-10q-6 0-6 6v5h-3q-7 0-7-8v-5q0-7 7-7h12v-3h-10v-3q0-6 7-6z"
            fill="#3f79a9"
            stroke="#dfe8ee"
            strokeWidth="1"
          />
          <circle cx="1803" cy="2188" r="2" fill="#eee" />
          <path
            d="M1815 2231h-10q-7 0-7-6v-9q0-5 6-5h11q8 0 8-7v-9h3q7 1 7 9v6q0 7-7 7h-12v3h9v4q0 7-8 7z"
            fill="#fdd33f"
            stroke="#fff3c4"
            strokeWidth="1"
          />
        </TaskIcon>
        <TaskIcon x={1906} w={72}>
          <path d="M1906 2181l35-24 35 24v10h-70z" fill="#0c5fb3" />
          <path d="M1906 2183h70v42h-70z" fill="#43cdf8" />
          <path d="M1912 2183h58l-29 24z" fill="#f4f4f4" />
          <path d="M1906 2182l70 43h-70z" fill="#1f9fe6" />
          <path d="M1912 2184h58l-29 20z" fill="#f4f4f4" />
        </TaskIcon>
        <TaskIcon x={2049} w={72}>
          <circle cx="2084.500" cy="2190.500" r="35.500" fill="#fbc116" />
          <path d="M2084.500 2190.500L2053.800 2172.700A35.500 35.500 0 0 0 2084.500 2226L2100 2199z" fill="#23953c" />
          <path d="M2053.800 2172.700A35.500 35.500 0 0 1 2115.200 2172.700H2084.500L2069 2199z" fill="#e33b2e" />
          <circle cx="2084.500" cy="2190.500" r="17.500" fill="#fff" />
          <circle cx="2084.500" cy="2190.500" r="14" fill="#2f7bea" />
        </TaskIcon>
        <div className="w-[140px] bg-[#454545]">
          <TaskIcon x={2158} w={140}>
            <path d="M2195 2157h63v65h-63z" fill="#f7f7f7" />
            <TableauMark x={2226.5} y={2189.5} k={1.02} />
            <path d="M2158 2243h140v7h-140z" fill="#a8dcf8" />
          </TaskIcon>
        </div>
        <TaskIcon x={2313} w={118}>
          <circle cx="2374" cy="2190" r="33" fill="#d9532f" />
          <path d="M2374 2157a33 33 0 0 1 33 33h-33z" fill="#ff8f6b" />
          <path d="M2374 2157a33 33 0 0 0-33 33h33z" fill="#ed6c47" />
          <rect x="2340" y="2171" width="42" height="44" rx="3" fill="#8f2c14" />
          <rect x="2336" y="2169" width="43" height="43" rx="3" fill="#c33b1b" />
          <text x="2346" y="2202" fontSize="33" fontWeight="700" fill="#fff" className="font-['Open_Sans',sans-serif]">
            P
          </text>
          <path d="M2313 2243h117v7h-117z" fill="#a8dcf8" />
        </TaskIcon>
      </div>
      <div className="ml-auto flex w-[741px] items-center">
        <Ico box={[3260, 2131, 294, 119]} c="#eee">
          <path d="M3271 2199l17-17 17 17" strokeWidth="3.500" />
          <path d="M3336.500 2183h7l11-9v34l-11-9h-7zM3360 2184q5 7 0 14M3366 2179q9 12 0 24" />
          <path d="M3374 2174q12 17 0 35" stroke="#777" />
          <path d="M3415.500 2210q2-30 34-34M3424 2210q2-22 26-25M3433 2210q2-14 17-16M3441 2210q2-6 9-7" strokeWidth="2.800" />
          <circle cx="3446" cy="2207" r="4" fill="#fff" stroke="none" />
          <path d="M3522 2190v-10.500h-41.500v26h16" />
          <path d="M3489 2184v17" strokeWidth="8" />
          <circle cx="3510" cy="2201" r="13" fill="#0f9a1e" stroke="none" />
          <path d="M3510 2192q8 6 0 14-8-8 0-14v20" stroke="#d8ffd8" strokeWidth="2.500" />
        </Ico>
        <T w={65} className="text-[35px]">
          ENG
        </T>
        <div className="ml-[42px] flex w-[167px] flex-col items-center gap-[17px] pb-[2px] text-[35px]">
          <T w={78}>17:46</T>
          <T w={166}>12-10-2023</T>
        </div>
        <Ico box={[3828, 2131, 173, 119]} c="#eee">
          <path d="M3881.500 2168.500h44v36h-15l-7 8-7-8h-15z" />
          <path d="M3987.500 2131v119" stroke="#777" />
        </Ico>
      </div>
    </div>
  );
}

export default function App() {
  return (
    <div className="flex h-[2250px] w-[4001px] flex-col overflow-hidden bg-[#f4f4f4] font-['Open_Sans','Noto_Sans',sans-serif]">
      <TitleBar />
      <MenuBar />
      <Toolbar />
      <div className="flex h-[1737px]">
        <DataPane />
        <CardsColumn />
        <ViewArea />
      </div>
      <SheetTabs />
      <StatusBar />
      <Taskbar />
    </div>
  );
}
